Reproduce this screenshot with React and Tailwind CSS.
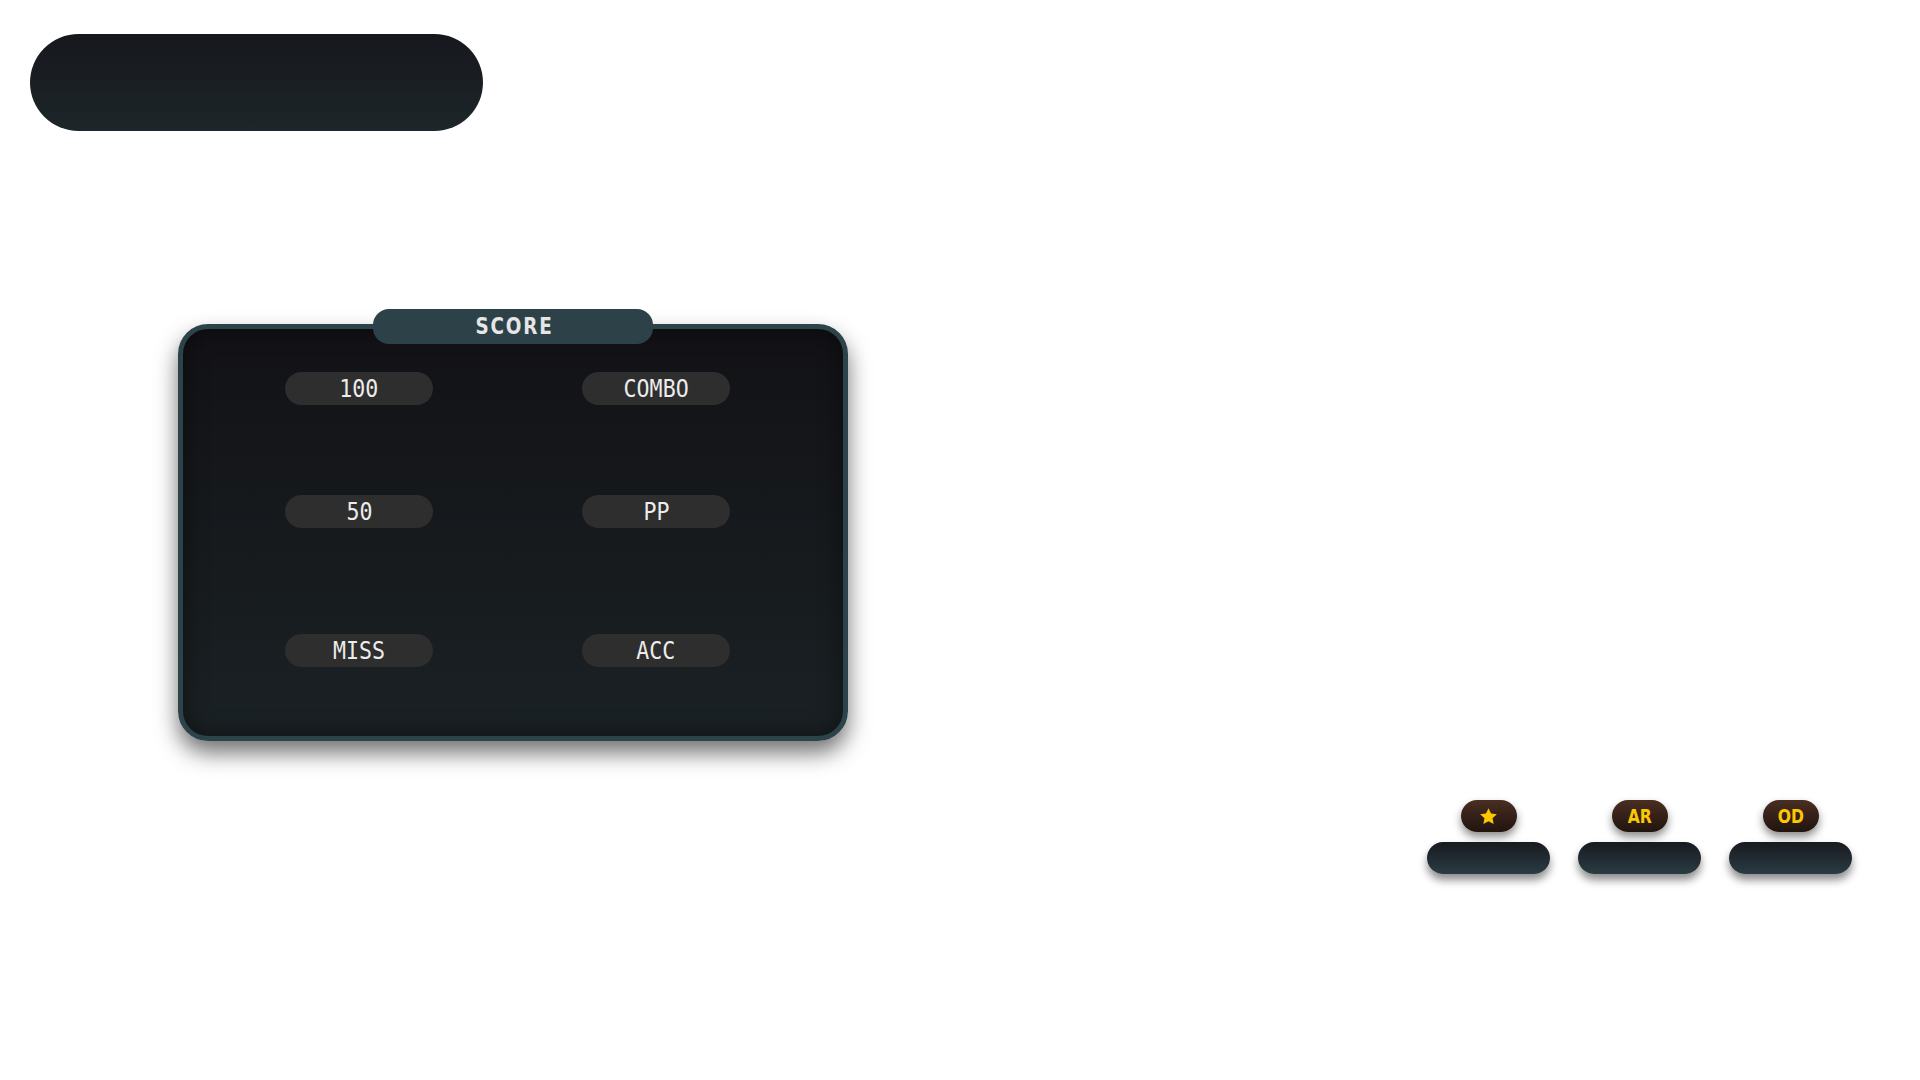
import React from 'react';

const stats = [
  ['100', 'COMBO'],
  ['50', 'PP'],
  ['MISS', 'ACC'],
];

const mapStats = [
  { key: 'sr', label: null },
  { key: 'ar', label: 'AR' },
  { key: 'od', label: 'OD' },
];

const Star = () => (
  <svg width="19" height="19" viewBox="0 0 24 24" fill="#fcc800">
    <path d="M12 1.5l3.2 6.7 7.3.9-5.4 5.1 1.4 7.3L12 18l-6.5 3.5 1.4-7.3-5.4-5.1 7.3-.9z" />
  </svg>
);

const StatPill = ({ text }) => (
  <div className="h-[33px] w-[148px] rounded-full bg-[#2e2e2e] flex items-center justify-center text-[24px] leading-none text-[#ececec] font-['DejaVu_Sans_Mono',monospace] [font-variant-numeric:slashed-zero]">
    <span className="inline-block scale-x-[0.9] scale-y-[1.05]">{text}</span>
  </div>
);

const App = () => {
  return (
    <div className="min-h-screen w-full bg-white">
      <div className="pt-[34px] pl-[30px]">
        <div className="h-[97px] w-[453px] rounded-full bg-gradient-to-b from-[#16171c] to-[#1d262a]"></div>
      </div>

      <div className="ml-[178px] mt-[178px] w-[670px] flex flex-col items-center">
        <div className="relative z-10 h-[35px] w-[280px] rounded-[16px] bg-[#2c4148] flex items-center justify-center">
          <span className="inline-block scale-x-[0.8] pl-[4px] text-[23px] font-bold tracking-[0.1em] text-[#e6e6e6] font-['DejaVu_Sans',sans-serif]">
            SCORE
          </span>
        </div>
        <div className="-mt-[20px] h-[417px] w-full rounded-[30px] border-[5px] border-[#2d434a] bg-gradient-to-b from-[#121216] to-[#1a2124] shadow-[0_12px_22px_rgba(0,0,0,0.55),inset_0_0_24px_rgba(0,0,0,0.45)]">
          <div className="pl-[102px] pt-[43px] flex flex-col">
            <div className="flex gap-[149px]">
              <StatPill text={stats[0][0]} />
              <StatPill text={stats[0][1]} />
            </div>
            <div className="mt-[90px] flex gap-[149px]">
              <StatPill text={stats[1][0]} />
              <StatPill text={stats[1][1]} />
            </div>
            <div className="mt-[106px] flex gap-[149px]">
              <StatPill text={stats[2][0]} />
              <StatPill text={stats[2][1]} />
            </div>
          </div>
        </div>
      </div>

      <div className="mt-[59px] pr-[68px] flex justify-end gap-[28px]">
        {mapStats.map((s) => (
          <div key={s.key} className="w-[123px] flex flex-col items-center gap-[10px]">
            <div className="h-[32px] w-[56px] rounded-full bg-gradient-to-b from-[#4a2e22] to-[#21140f] shadow-[0_5px_8px_rgba(0,0,0,0.45)] flex items-center justify-center">
              {s.label ? (
                <span className="inline-block scale-x-[0.82] text-[19px] font-bold leading-none text-[#fcc800] font-['DejaVu_Sans',sans-serif]">
                  {s.label}
                </span>
              ) : (
                <Star />
              )}
            </div>
            <div className="h-[32px] w-[123px] rounded-full bg-gradient-to-b from-[#181a20] to-[#2a3c43] shadow-[0_6px_8px_rgba(0,0,0,0.45)]"></div>
          </div>
        ))}
      </div>
    </div>
  );
};

export default App;
